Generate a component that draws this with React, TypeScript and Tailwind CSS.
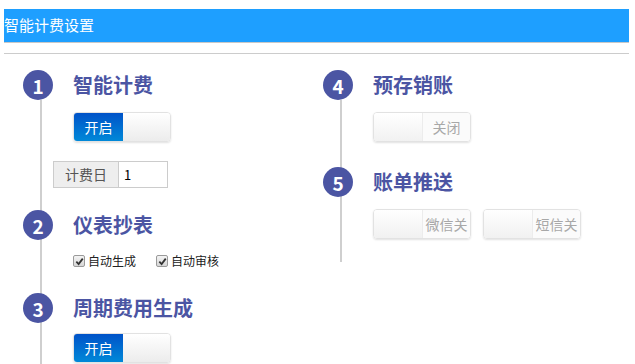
import React from "react";

const font = { fontFamily: '"Noto Sans CJK SC", "Noto Sans", sans-serif' };

function Step({ n, title }: { n: number; title: string }) {
  return (
    <div className="flex h-[30px] items-center">
      <div className="relative z-10 flex h-[30px] w-[30px] items-center justify-center rounded-full bg-[#4b55a3] text-[19px] font-bold leading-none text-white">
        {n}
      </div>
      <div className="ml-[20px] text-[20px] font-bold leading-[30px] text-[#4b55a3]">
        {title}
      </div>
    </div>
  );
}

function Toggle({ on, label }: { on: boolean; label: string }) {
  return (
    <div className="flex h-[30px] w-[98px] overflow-hidden rounded-[4px] border border-[#e2e2e2] shadow-[0_1px_2px_rgba(0,0,0,0.12)]">
      {on ? (
        <>
          <div className="flex w-[49px] items-center justify-center bg-gradient-to-b from-[#0052c8] to-[#0088d8] text-[14px] text-white">
            {label}
          </div>
          <div className="flex-1 bg-gradient-to-b from-white to-[#ececec]" />
        </>
      ) : (
        <>
          <div className="w-[49px] border-r border-[#ececec] bg-gradient-to-b from-white to-[#f1f1f1]" />
          <div className="flex flex-1 items-center justify-center bg-[#fbfbfb] text-[14px] text-[#a8a8a8]">
            {label}
          </div>
        </>
      )}
    </div>
  );
}

function Check({ label }: { label: string }) {
  return (
    <div className="flex items-center">
      <div className="flex h-[12px] w-[12px] items-center justify-center rounded-[2px] border border-[#9a9a9a] bg-gradient-to-b from-[#f4f4f4] to-[#d6d6d6]">
        <svg width="9" height="9" viewBox="0 0 10 10">
          <path d="M1.5 5.2 L4 7.8 L8.6 1.8" fill="none" stroke="#333" strokeWidth="2" />
        </svg>
      </div>
      <span className="ml-[3px] text-[12px] leading-[14px] text-[#222]">{label}</span>
    </div>
  );
}

export default function App() {
  return (
    <div className="h-[364px] overflow-hidden bg-white pl-[4px] pr-[6px] pt-[9px]" style={font}>
      <div className="h-[34px] border-b border-[#c8c8c8] bg-[#1e9fff] pt-[3px]">
        <span className="text-[15px] leading-[20px] text-white">智能计费设置</span>
      </div>
      <div className="mt-[10px] h-px bg-[#cccccc]" />

      <div className="flex pl-[19px] pt-[16px]">
        <div className="relative w-[300px]">
          <div className="absolute left-[17px] top-[30px] bottom-[-20px] w-[2px] bg-[#cfcfcf]" />
          <Step n={1} title="智能计费" />
          <div className="ml-[50px] mt-[12px]">
            <Toggle on label="开启" />
          </div>
          <div className="ml-[30px] mt-[19px] flex h-[27px] w-[115px] border border-[#cccccc] text-[14px]">
            <div className="flex w-[65px] items-center justify-center border-r border-[#cccccc] bg-[#eeeeee] text-[#555]">
              计费日
            </div>
            <div className="flex flex-1 items-center bg-white pl-[5px] text-[13px] text-black">1</div>
          </div>
          <div className="mt-[22px]">
            <Step n={2} title="仪表抄表" />
          </div>
          <div className="ml-[50px] mt-[15px] flex h-[12px] items-center gap-[20px]">
            <Check label="自动生成" />
            <Check label="自动审核" />
          </div>
          <div className="mt-[26px]">
            <Step n={3} title="周期费用生成" />
          </div>
          <div className="ml-[50px] mt-[10px]">
            <Toggle on label="开启" />
          </div>
        </div>

        <div className="relative w-[300px]">
          <div className="absolute left-[17px] top-[30px] h-[162px] w-[2px] bg-[#cfcfcf]" />
          <Step n={4} title="预存销账" />
          <div className="ml-[50px] mt-[12px]">
            <Toggle on={false} label="关闭" />
          </div>
          <div className="mt-[25px]">
            <Step n={5} title="账单推送" />
          </div>
          <div className="ml-[50px] mt-[12px] flex gap-[12px]">
            <Toggle on={false} label="微信关" />
            <Toggle on={false} label="短信关" />
          </div>
        </div>
      </div>
    </div>
  );
}
